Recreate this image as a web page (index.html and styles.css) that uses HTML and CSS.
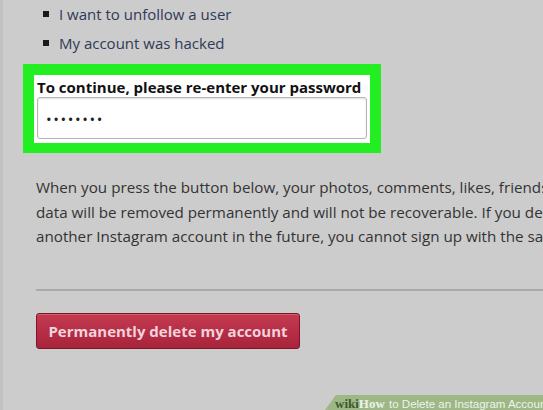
FILE: index.html
```html
<!DOCTYPE html>
<html lang="en">
<head>
    <meta charset="UTF-8">
    <title>Delete Your Account</title>
    <link rel="stylesheet" href="styles.css">
</head>
<body>
    <div class="page">
        <ul class="reasons">
            <li>I want to unfollow a user</li>
            <li>My account was hacked</li>
        </ul>

        <div class="highlight">
            <div class="password-field">
                <label for="password">To continue, please re-enter your password</label>
                <div class="input">&bull;&bull;&bull;&bull;&bull;&bull;&bull;&bull;</div>
            </div>
        </div>

        <p class="warning">
            <span>When you press the button below, your photos, comments, likes, friends</span>
            <span>data will be removed permanently and will not be recoverable. If you de</span>
            <span>another Instagram account in the future, you cannot sign up with the sa</span>
        </p>

        <hr class="divider">

        <button class="delete-btn">Permanently delete my account</button>
    </div>

    <!-- watermark sits over the page -->
    <div class="watermark"><b class="wiki">wiki</b><b class="how">How</b> to Delete an Instagram Account</div>
</body>
</html>
```

FILE: styles.css
```css
/* Global */
body {
    margin: 0;
    width: 543px;
    height: 410px;
    overflow: hidden;
    background-color: #cccccc;
    font-family: "Open Sans", "Noto Sans", sans-serif;
    position: relative;
    border-left: 3px solid #c2c2c2;
    box-sizing: border-box;
}

.page {
    width: 900px;
    padding: 0 0 0 33px;
}

/* Reasons list */
.reasons {
    margin: 0;
    padding: 0 0 0 7px;
    list-style: none;
    color: #2f3a57;
    font-size: 15px;
    line-height: 29px;
}

.reasons li::before {
    content: "";
    display: inline-block;
    width: 6px;
    height: 6px;
    margin: 0 10px 3px 0;
    background: #1a1a1a;
    vertical-align: middle;
}

/* Green highlight around password */
.highlight {
    width: 336px;
    margin: 6px 0 0 -13px;
    padding: 11px 11px 10px 11px;
    background-color: #22ee22;
}

.password-field {
    background: #fff;
    padding: 2px 3px 4px 3px;
}

.password-field label {
    display: block;
    font-weight: bold;
    font-size: 15px;
    color: #111;
    line-height: 20px;
}

.input {
    height: 40px;
    border: 1px solid #b5b5b5;
    border-radius: 3px;
    box-shadow: inset 0 1px 2px rgba(0, 0, 0, 0.12);
    padding-left: 8px;
    font-size: 15px;
    line-height: 42px;
    letter-spacing: 1.6px;
    color: #222;
}

/* Warning paragraph */
.warning {
    margin: 22px 0 0 0;
    color: #333;
    font-size: 15.2px;
    line-height: 24.5px;
}

.warning span {
    display: block;
    white-space: nowrap;
}

.divider {
    margin: 40px 0 0 0;
    border: 0;
    border-top: 2px solid #a9a9a9;
}

/* Delete button */
.delete-btn {
    margin-top: 22px;
    width: 264px;
    height: 36px;
    border: 1px solid #7e1526;
    border-radius: 3px;
    background: linear-gradient(#c43a51, #a8243b);
    color: #f3d3da;
    font-family: inherit;
    font-weight: bold;
    font-size: 15px;
    box-shadow: inset 0 1px 0 rgba(255, 255, 255, 0.2);
}

/* wikiHow watermark */
.watermark {
    position: absolute;
    right: 0;
    bottom: 0;
    width: 208px;
    height: 15px;
    padding-left: 10px;
    background: #9db787;
    clip-path: polygon(5% 0, 100% 0, 100% 100%, 0 100%);
    color: #eef3e8;
    font-family: "Liberation Sans", Arial, sans-serif;
    font-size: 11.5px;
    line-height: 17px;
    white-space: nowrap;
}

.watermark .wiki {
    font-family: "Liberation Serif", serif;
    color: #3e5a2c;
    font-size: 13px;
}

.watermark .how {
    font-family: "Liberation Serif", serif;
    font-size: 13px;
    margin-right: 1px;
}
```
